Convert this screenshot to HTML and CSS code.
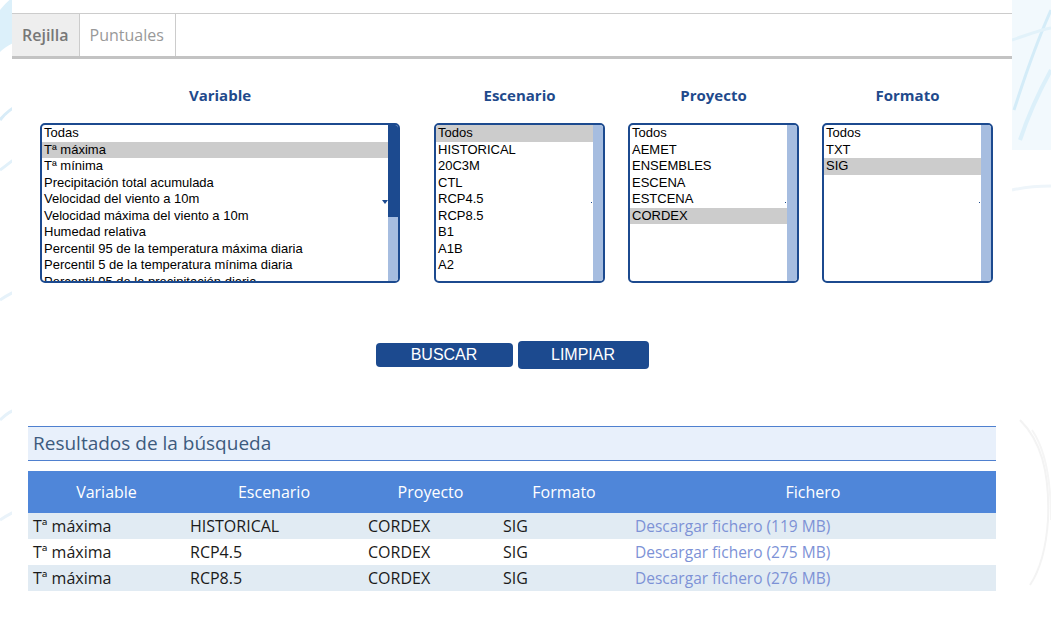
FILE: index.html
```html
<!DOCTYPE html>
<html lang="es">
<head>
<meta charset="utf-8">
<title>Descarga de datos</title>
<link rel="stylesheet" href="styles.css">
</head>
<body>
<div class="bg" aria-hidden="true">
  <svg width="1051" height="620" viewBox="0 0 1051 620">
    <path d="M0 10 C 8 0, 14 -4, 20 -6 L 20 40 C 10 44, 4 48, 0 52 Z" fill="#dcf0fa"/>
    <path d="M0 120 C 6 112, 12 108, 20 104" stroke="#d8ecf8" stroke-width="3" fill="none"/>
    <path d="M0 170 C 6 166, 12 160, 20 156" stroke="#e2f1fa" stroke-width="3" fill="none"/>
    <path d="M0 300 C 6 296, 12 292, 20 290" stroke="#e6f2fa" stroke-width="3" fill="none"/>
    <path d="M0 420 C 6 414, 12 410, 20 408" stroke="#e6f2fa" stroke-width="3" fill="none"/>
    <path d="M0 520 C 6 516, 12 512, 20 510" stroke="#eaf3fa" stroke-width="3" fill="none"/>
    <path d="M1012 0 L 1051 0 L 1051 150 L 1012 150 Z" fill="#f2f9fd"/>
    <path d="M1014 110 C 1030 60, 1042 30, 1051 10" stroke="#d4ecf8" stroke-width="3" fill="none"/>
    <path d="M1020 140 C 1030 110, 1040 90, 1051 70" stroke="#dcf0fa" stroke-width="4" fill="none"/>
    <path d="M1012 40 C 1030 34, 1040 30, 1051 28" stroke="#e2f2fa" stroke-width="3" fill="none"/>
    <path d="M1012 190 C 1030 186, 1040 186, 1051 186" stroke="#eef5fa" stroke-width="3" fill="none"/>
    <path d="M1020 420 C 1040 440, 1050 470, 1048 520 C 1046 550, 1040 570, 1030 585" stroke="#f3f3f3" stroke-width="2" fill="none"/>
    <path d="M1032 430 C 1046 450, 1051 480, 1051 520" stroke="#f5f5f5" stroke-width="2" fill="none"/>
  </svg>
</div>
<div class="page">
  <div class="tabs">
    <div class="tab tab-active">Rejilla</div>
    <div class="tab">Puntuales</div>
  </div>

  <div class="filters">
    <div class="filter filter-variable">
      <h3 class="filter-title">Variable</h3>
      <div class="listbox">
        <ul class="options">
          <li>Todas</li>
          <li class="selected">Tª máxima</li>
          <li>Tª mínima</li>
          <li>Precipitación total acumulada</li>
          <li>Velocidad del viento a 10m</li>
          <li>Velocidad máxima del viento a 10m</li>
          <li>Humedad relativa</li>
          <li>Percentil 95 de la temperatura máxima diaria</li>
          <li>Percentil 5 de la temperatura mínima diaria</li>
          <li>Percentil 95 de la precipitación diaria</li>
          <li>Número de días de helada</li>
        </ul>
        <div class="scrollbar"><div class="thumb"></div><span class="arrow"></span></div>
      </div>
    </div>
    <div class="filter">
      <h3 class="filter-title">Escenario</h3>
      <div class="listbox">
        <ul class="options">
          <li class="selected">Todos</li>
          <li>HISTORICAL</li>
          <li>20C3M</li>
          <li>CTL</li>
          <li>RCP4.5</li>
          <li>RCP8.5</li>
          <li>B1</li>
          <li>A1B</li>
          <li>A2</li>
        </ul>
        <div class="scrollbar"><span class="dot"></span></div>
      </div>
    </div>
    <div class="filter">
      <h3 class="filter-title">Proyecto</h3>
      <div class="listbox">
        <ul class="options">
          <li>Todos</li>
          <li>AEMET</li>
          <li>ENSEMBLES</li>
          <li>ESCENA</li>
          <li>ESTCENA</li>
          <li class="selected">CORDEX</li>
        </ul>
        <div class="scrollbar"><span class="dot"></span></div>
      </div>
    </div>
    <div class="filter">
      <h3 class="filter-title">Formato</h3>
      <div class="listbox">
        <ul class="options">
          <li>Todos</li>
          <li>TXT</li>
          <li class="selected">SIG</li>
        </ul>
        <div class="scrollbar"><span class="dot"></span></div>
      </div>
    </div>
  </div>

  <div class="actions">
    <button class="btn btn-search" type="button">BUSCAR</button>
    <button class="btn btn-clear" type="button">LIMPIAR</button>
  </div>

  <section class="results">
    <h2 class="results-title">Resultados de la búsqueda</h2>
    <table class="results-table">
      <colgroup>
        <col class="c1"><col class="c2"><col class="c3"><col class="c4"><col class="c5">
      </colgroup>
      <thead>
        <tr><th>Variable</th><th>Escenario</th><th>Proyecto</th><th>Formato</th><th>Fichero</th></tr>
      </thead>
      <tbody>
        <tr><td>Tª máxima</td><td>HISTORICAL</td><td>CORDEX</td><td>SIG</td><td><a href="#">Descargar fichero (119 MB)</a></td></tr>
        <tr><td>Tª máxima</td><td>RCP4.5</td><td>CORDEX</td><td>SIG</td><td><a href="#">Descargar fichero (275 MB)</a></td></tr>
        <tr><td>Tª máxima</td><td>RCP8.5</td><td>CORDEX</td><td>SIG</td><td><a href="#">Descargar fichero (276 MB)</a></td></tr>
      </tbody>
    </table>
  </section>
</div>
</body>
</html>
```

FILE: styles.css
```css
* { box-sizing: border-box; }

html, body {
  margin: 0;
  padding: 0;
  background: #ffffff;
}

body {
  font-family: "Open Sans", "Liberation Sans", sans-serif;
  color: #333333;
  width: 1051px;
  height: 620px;
  overflow: hidden;
  position: relative;
}

.bg {
  position: absolute;
  left: 0;
  top: 0;
  z-index: 0;
}

.page {
  position: relative;
  z-index: 1;
  margin-left: 12px;
  width: 1000px;
  padding-top: 13px;
  background: #ffffff;
  height: 620px;
}

/* Tabs */
.tabs {
  display: flex;
  border-top: 1px solid #cccccc;
  border-bottom: 3px solid #c3c3c3;
  height: 46px;
}

.tab {
  height: 42px;
  line-height: 42px;
  padding: 0 11px 0 10px;
  font-size: 16px;
  color: #999999;
  border-right: 1px solid #cccccc;
}

.tab-active {
  background: #eeeeee;
  color: #777777;
  font-weight: 600;
  padding: 0 10px 0 10px;
}

/* Filters */
.filters {
  display: flex;
  padding-top: 26px;
  padding-left: 28px;
  gap: 23px;
}

.filter {
  width: 171px;
  display: flex;
  flex-direction: column;
  align-items: stretch;
}

.filter-variable {
  width: 360px;
  margin-right: 11px;
}

.filter-title {
  margin: 0 0 18px 0;
  height: 20px;
  line-height: 20px;
  text-align: center;
  font-size: 15px;
  font-weight: 700;
  color: #1f4a8c;
}

.listbox {
  display: flex;
  height: 160px;
  border: 2px solid #1c4a8f;
  border-radius: 5px;
  overflow: hidden;
  background: #ffffff;
}

.options {
  flex: 1;
  list-style: none;
  margin: 0;
  padding: 0;
  overflow: hidden;
  font-family: "Liberation Sans", Arial, sans-serif;
  font-size: 13px;
  color: #000000;
}

.options li {
  height: 16.5px;
  line-height: 16px;
  padding-left: 2px;
  white-space: nowrap;
}

.options li.selected {
  background: #cccccc;
}

.scrollbar {
  width: 10px;
  background: #a6bde0;
  position: relative;
  flex: none;
}

.thumb {
  height: 92px;
  background: #1c4a8f;
}

.arrow {
  position: absolute;
  left: -6px;
  top: 75px;
  width: 0;
  height: 0;
  border-left: 3px solid transparent;
  border-right: 3px solid transparent;
  border-top: 4px solid #1c4a8f;
}

.dot {
  position: absolute;
  left: -2px;
  top: 77px;
  width: 1px;
  height: 1px;
  background: #1c4a8f;
}

/* Buttons */
.actions {
  display: flex;
  justify-content: center;
  align-items: center;
  gap: 5px;
  margin-top: 58px;
}

.btn {
  border: none;
  background: #1c4a8f;
  color: #ffffff;
  font-family: "Liberation Sans", Arial, sans-serif;
  font-size: 16px;
  border-radius: 4px;
  padding: 0;
  cursor: pointer;
}

.btn-search {
  width: 137px;
  height: 24px;
}

.btn-clear {
  width: 131px;
  height: 28px;
}

/* Results */
.results {
  margin-top: 57px;
  margin-left: 16px;
  width: 968px;
}

.results-title {
  margin: 0;
  height: 35px;
  line-height: 32px;
  padding-left: 5px;
  font-size: 19px;
  font-weight: 400;
  color: #3d5b7e;
  background: #e8f0fb;
  border-top: 1px solid #4f80cf;
  border-bottom: 1px solid #4f80cf;
}

.results-table {
  margin-top: 10px;
  width: 968px;
  table-layout: fixed;
  border-collapse: collapse;
  font-size: 16px;
}

.c1 { width: 157px; }
.c2 { width: 178px; }
.c3 { width: 135px; }
.c4 { width: 132px; }
.c5 { width: 366px; }

.results-table th {
  background: #4f86d9;
  color: #ffffff;
  font-weight: 400;
  height: 42px;
  text-align: center;
  padding: 0;
}

.results-table td {
  height: 26px;
  padding: 0 0 0 5px;
  color: #1a1a1a;
  white-space: nowrap;
}

.results-table tbody tr:nth-child(odd) td {
  background: #e1ebf3;
}

.results-table a {
  color: #7d92d6;
  font-size: 15.5px;
  font-weight: 400;
  text-decoration: none;
}
```
